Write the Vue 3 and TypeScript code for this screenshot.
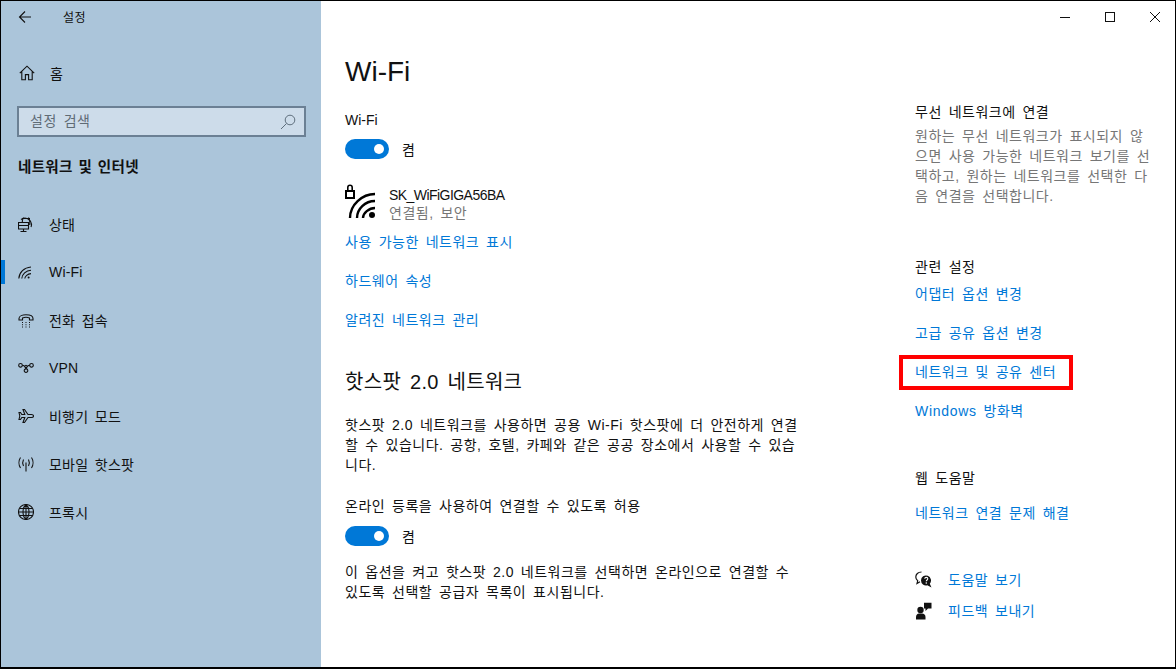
<template>
  <div class="window">
    <aside class="sidebar">
      <div class="titlebar">
        <svg class="back" width="16" height="16" viewBox="0 0 16 16" fill="none" stroke="#111" stroke-width="1.100">
          <path d="M14 8H2.500M8 2.500 2.500 8 8 13.500" />
        </svg>
        <span class="app-title">설정</span>
      </div>

      <div class="home">
        <svg width="16" height="16" viewBox="0 0 16 16" fill="none" stroke="#111" stroke-width="1.100">
          <path d="M.8 8.200 8 1.200l7.200 7M2.800 6.500v8.300h3.600V9.600h3.200v5.200h3.600V6.500" />
        </svg>
        <span>홈</span>
      </div>

      <div class="search">
        <span>설정 검색</span>
        <svg width="16" height="16" viewBox="0 0 16 16" fill="none" stroke="#5f6f7d" stroke-width="1">
          <circle cx="10" cy="6" r="4.800" />
          <path d="M6.500 9.500 1 15" />
        </svg>
      </div>

      <div class="section-name">네트워크 및 인터넷</div>

      <nav class="nav">
        <div v-for="item in navItems" :key="item.label" class="nav-item" :class="{ active: item.active }">
          <svg width="16" height="16" viewBox="0 0 16 16" fill="none" stroke="#111" stroke-width="1.100">
            <path v-for="d in item.paths" :key="d" :d="d" />
            <circle v-if="item.dot" cx="10.600" cy="13.400" r="1" fill="#111" stroke="none" />
          </svg>
          <span>{{ item.label }}</span>
        </div>
      </nav>
    </aside>

    <main class="content">
      <div class="window-controls">
        <svg width="10" height="10" viewBox="0 0 10 10" stroke="#111" fill="none"><path d="M0 5.500h10" /></svg>
        <svg width="10" height="10" viewBox="0 0 10 10" stroke="#111" fill="none"><rect x=".5" y=".5" width="9" height="9" /></svg>
        <svg width="10" height="10" viewBox="0 0 10 10" stroke="#111" fill="none"><path d="M0 0l10 10M10 0 0 10" /></svg>
      </div>

      <div class="columns">
        <section class="main-col">
          <h1>Wi-Fi</h1>
          <div class="label wifi-label">Wi-Fi</div>
          <div class="toggle-row">
            <span class="toggle"><i></i></span>
            <span>켬</span>
          </div>

          <div class="network">
            <svg width="32" height="36" viewBox="0 0 32 36" fill="none" stroke="#000">
              <rect x="1" y="7" width="8" height="7" stroke-width="2" />
              <path d="M2.800 7V3.500a2.200 2.200 0 0 1 4.400 0V7" stroke-width="1.600" />
              <path d="M5 34C5 21 17 10 30 10M12 34c0-9 8-17 18-17M18 34c0-5 6-10 12-10" stroke-width="2.400" />
              <circle cx="27" cy="31" r="3" fill="#000" stroke="none" />
            </svg>
            <div class="network-text">
              <div class="ssid">SK_WiFiGIGA56BA</div>
              <div class="muted">연결됨, 보안</div>
            </div>
          </div>

          <div class="links">
            <a>사용 가능한 네트워크 표시</a>
            <a>하드웨어 속성</a>
            <a>알려진 네트워크 관리</a>
          </div>

          <h2>핫스팟 2.0 네트워크</h2>
          <p class="desc">핫스팟 2.0 네트워크를 사용하면 공용 Wi-Fi 핫스팟에 더 안전하게 연결할 수 있습니다. 공항, 호텔, 카페와 같은 공공 장소에서 사용할 수 있습니다.</p>
          <div class="label online-label">온라인 등록을 사용하여 연결할 수 있도록 허용</div>
          <div class="toggle-row second">
            <span class="toggle"><i></i></span>
            <span>켬</span>
          </div>
          <p class="desc last">이 옵션을 켜고 핫스팟 2.0 네트워크를 선택하면 온라인으로 연결할 수 있도록 선택할 공급자 목록이 표시됩니다.</p>
        </section>

        <section class="side-col">
          <div class="side-title first">무선 네트워크에 연결</div>
          <p class="side-desc">원하는 무선 네트워크가 표시되지 않으면 사용 가능한 네트워크 보기를 선택하고, 원하는 네트워크를 선택한 다음 연결을 선택합니다.</p>

          <div class="side-title related">관련 설정</div>
          <div class="side-links">
            <a>어댑터 옵션 변경</a>
            <a>고급 공유 옵션 변경</a>
            <a class="marked">네트워크 및 공유 센터</a>
            <a><span class="latin-wide">Windows</span> 방화벽</a>
          </div>

          <div class="side-title web">웹 도움말</div>
          <a class="trouble">네트워크 연결 문제 해결</a>

          <div class="help-row help-first">
            <svg width="18" height="18" viewBox="0 0 18 18">
              <path d="M6.500 1C3 1 .8 3.200.8 6c0 1.600.7 2.900 1.900 3.800L2 12.500l3-1.700" fill="none" stroke="#111" stroke-width="1.200" />
              <path d="M6 9.500a5 5 0 1 1 8.800 3.200l1.700 3.800-4.200-2.200A5 5 0 0 1 6 9.500z" fill="#111" />
              <path d="M9.700 7.800c.2-1.900 3.100-1.800 3.100 0 0 1.200-1.500 1.200-1.500 2.500" fill="none" stroke="#fff" stroke-width="1.100" />
              <circle cx="11.300" cy="12" r=".8" fill="#fff" />
            </svg>
            <a>도움말 보기</a>
          </div>
          <div class="help-row">
            <svg width="18" height="18" viewBox="0 0 18 18" fill="#111">
              <circle cx="5.500" cy="8" r="3.200" />
              <path d="M1 17.500v-2.500c0-2 1.500-3.500 3-3.500h3c2 0 3.500 1.500 3.500 3.500v2.500z" />
              <path d="M9 .8h7.500v5.700h-3.500L10.500 9V6.500H9z" />
            </svg>
            <a>피드백 보내기</a>
          </div>
        </section>
      </div>
    </main>
  </div>
</template>

<script setup lang="ts">
interface NavItem {
  label: string
  paths: string[]
  active?: boolean
  dot?: boolean
}

const navItems: NavItem[] = [
  {
    label: '상태',
    paths: [
      'M3 3.500A6.500 6.500 0 0 1 13 11',
      'M4 2.500h8M5.500 1.500C4.500 3 4.300 4.500 4.300 6.500M10.500 1.500c1 1.500 1.500 4 1.300 7.500',
      'M.5 6.500h10v6.500H.5zM.5 9.500h10M5.500 13v2.500M2.500 15.500h6',
    ],
  },
  {
    label: 'Wi-Fi',
    active: true,
    dot: true,
    paths: ['M.8 14.500C1.200 8.500 6 3.500 13 3', 'M3.800 14.500C4 10.500 8 6.500 13 6.200', 'M6.800 14.500C7 12.500 9.500 9.800 13 9.600'],
  },
  {
    label: '전화 접속',
    paths: [
      'M1 6.500C1 1.500 15 1.500 15 6.500V8h-3.500V6c-2-.8-5-.8-7 0v2H1z',
      'M4 10.500h1M7.500 10.500h1M11 10.500h1M4 12.800h1M7.500 12.800h1M11 12.800h1M4 15h1M7.500 15h1M11 15h1',
    ],
  },
  {
    label: 'VPN',
    paths: [
      'M2.500 3.500a1.800 1.800 0 1 0 0 3.600 1.800 1.800 0 0 0 0-3.600z',
      'M13.500 3.500a1.800 1.800 0 1 0 0 3.600 1.800 1.800 0 0 0 0-3.600z',
      'M8 8.800a1.800 1.800 0 1 0 0 3.600 1.800 1.800 0 0 0 0-3.600z',
      'M4.300 5.300c1.700 0 3 1.500 3.700 3.500.7-2 2-3.500 3.700-3.500',
      'M6.500 6.500C7.500 4.800 8.500 4.800 9.500 6.500',
    ],
  },
  {
    label: '비행기 모드',
    paths: [
      'M15.500 8c0-1-1-1.500-2-1.500H10L6.500 1.500H5L6.800 6.500H3.800L2.500 4.500H1L1.800 8 1 11.500h1.500l1.300-2h3L5 14.500h1.500L10 9.500h3.500c1 0 2-.5 2-1.500z',
    ],
  },
  {
    label: '모바일 핫스팟',
    paths: [
      'M8 6.500V15.500',
      'M5.500 3.500C4.500 5.500 4.500 8 5.500 10M10.500 3.500c1 2 1 4.500 0 6.500',
      'M2.500 1.500C.5 4.500.5 9 2.500 12M13.500 1.500c2 3 2 7.500 0 10.500',
    ],
  },
  {
    label: '프록시',
    paths: [
      'M8 .5a7.500 7.500 0 1 0 0 15 7.500 7.500 0 0 0 0-15z',
      'M8 .5C4 4 4 12 8 15.500M8 .5c4 3.500 4 11.500 0 15M8 .5v15M.5 8h15M1.500 4.500h13M1.500 11.500h13',
    ],
  },
]
</script>

<style>
html,
body {
  margin: 0;
  background: #fff;
}
</style>

<style scoped>
.window {
  box-sizing: border-box;
  width: 1176px;
  height: 669px;
  display: flex;
  overflow: hidden;
  border: 1px solid #000;
  border-bottom-width: 2px;
  background: #fff;
  color: #111;
  font-family: "Liberation Sans", "Noto Sans CJK KR", sans-serif;
  font-size: 14px;
  letter-spacing: 0.5px;
  word-spacing: 2.500px;
}

/* 왼쪽 메뉴 */
.sidebar {
  width: 320px;
  flex-shrink: 0;
  background: #abc5da;
}

.titlebar {
  height: 31px;
  display: flex;
  align-items: center;
}

.back {
  margin-left: 16px;
}

.app-title {
  margin-left: 30px;
  font-size: 12px;
}

.home {
  display: flex;
  align-items: center;
  height: 24px;
  margin: 29px 0 0 18px;
  gap: 15px;
}

.search {
  box-sizing: border-box;
  width: 289px;
  height: 31px;
  margin: 21px 0 0 16px;
  padding: 0 8px 3px 11px;
  display: flex;
  align-items: center;
  justify-content: space-between;
  background: #cddcea;
  border: 2px solid #6b8094;
  color: #5f6b75;
}

.search svg {
  margin-top: 3px;
}

.section-name {
  margin: 19px 0 0 17px;
  font-size: 14.500px;
  font-weight: 700;
  line-height: 22px;
  letter-spacing: 0.3px;
  word-spacing: 1.500px;
}

.nav {
  margin-top: 22px;
}

.nav-item {
  position: relative;
  height: 48px;
  display: flex;
  align-items: center;
  gap: 15px;
  padding-left: 17px;
  letter-spacing: 0.2px;
}

.nav-item.active::before {
  content: "";
  position: absolute;
  left: 0;
  top: 12px;
  width: 4px;
  height: 24px;
  background: #0078d7;
}

/* 본문 */
.content {
  position: relative;
  flex: 1;
  min-width: 0;
}

.window-controls {
  position: absolute;
  top: 11px;
  right: 15px;
  display: flex;
  gap: 35px;
}

.columns {
  display: flex;
}

.main-col {
  width: 458px;
  margin-left: 24px;
}

h1 {
  margin: 50px 0 0;
  font-size: 28px;
  font-weight: 400;
  line-height: 42px;
  letter-spacing: 0;
}

.label {
  line-height: 20px;
}

.wifi-label {
  margin-top: 17px;
  letter-spacing: 0;
}

.toggle-row {
  display: flex;
  align-items: center;
  gap: 13px;
  height: 20px;
  margin-top: 9px;
}

.toggle {
  box-sizing: border-box;
  width: 44px;
  height: 20px;
  padding: 0 5px;
  display: flex;
  align-items: center;
  justify-content: flex-end;
  border-radius: 10px;
  background: #0078d7;
}

.toggle i {
  width: 10px;
  height: 10px;
  border-radius: 50%;
  background: #fff;
}

.network {
  display: flex;
  margin-top: 25px;
}

.network svg {
  flex-shrink: 0;
}

.network-text {
  margin: 2px 0 0 12px;
  line-height: 18px;
}

.ssid {
  letter-spacing: -0.55px;
}

.muted {
  color: #767676;
}

.links {
  margin-top: 10px;
  display: flex;
  flex-direction: column;
  gap: 19px;
}

a {
  display: block;
  color: #0078d7;
  line-height: 20px;
}

h2 {
  margin: 36px 0 0;
  font-size: 20px;
  font-weight: 400;
  line-height: 32px;
  letter-spacing: 0.3px;
  word-spacing: 3px;
}

.desc {
  margin: 17px 0 0;
  line-height: 20px;
  word-break: break-all;
}

.online-label {
  margin-top: 21px;
}

.toggle-row.second {
  margin-top: 10px;
}

.desc.last {
  margin-top: 16px;
}

.side-col {
  width: 238px;
  margin-left: 112px;
}

.side-title {
  line-height: 20px;
}

.first {
  margin-top: 101px;
}

.side-desc {
  margin: 4px 0 0;
  color: #767676;
  line-height: 20px;
  word-break: break-all;
}

.related {
  margin-top: 51px;
}

.side-links {
  margin-top: 7px;
  display: flex;
  flex-direction: column;
  gap: 19px;
}

.latin-wide {
  letter-spacing: 0.7px;
}

/* 빨간 표시 상자 */
.marked {
  position: relative;
}

.marked::after {
  content: "";
  position: absolute;
  left: -16px;
  right: 80px;
  top: -7px;
  bottom: -8px;
  border: 4px solid #f00;
}

.web {
  margin-top: 47px;
}

.trouble {
  margin-top: 15px;
}

.help-row {
  display: flex;
  align-items: center;
  gap: 15px;
  height: 20px;
  margin-top: 11px;
}

.help-first {
  margin-top: 47px;
}
</style>
